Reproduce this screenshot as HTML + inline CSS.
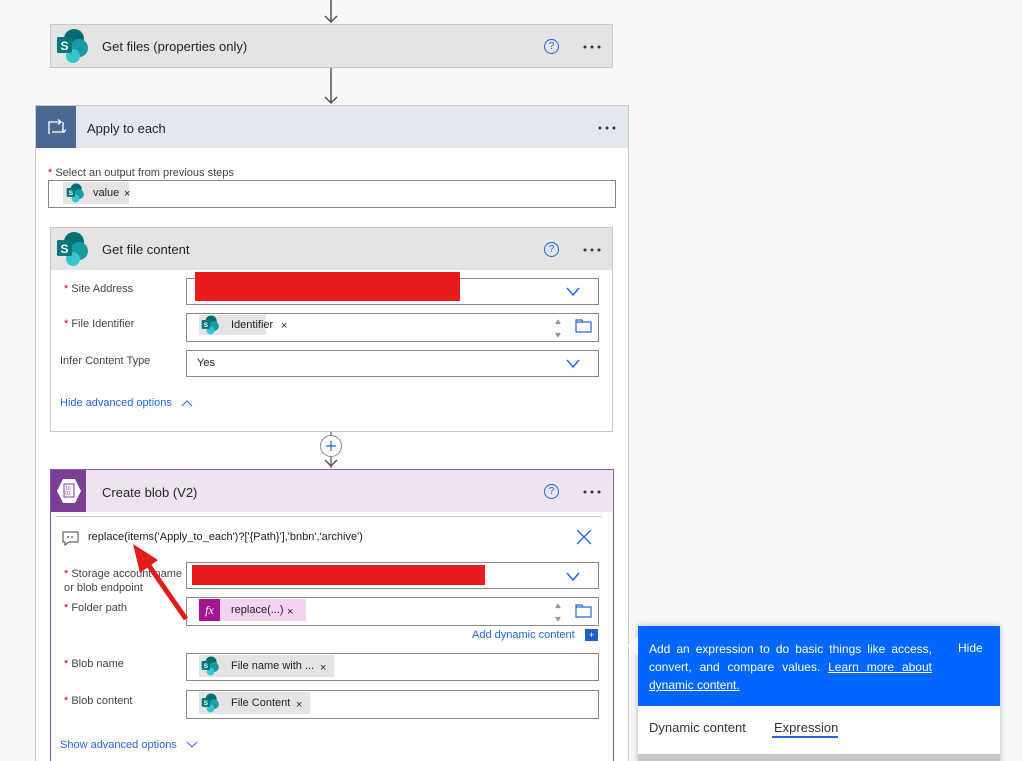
<!DOCTYPE html>
<html><head><meta charset="utf-8"><style>
*{box-sizing:border-box;margin:0;padding:0}
html,body{width:1022px;height:761px;overflow:hidden}
body{background:#f8f8f8;font-family:"Segoe UI","Liberation Sans",sans-serif;font-size:12px;color:#252423;position:relative}
.abs{position:absolute}
.card{position:absolute;border:1px solid #c8c8c8;background:#fff}
.hdr{position:absolute;left:0;right:0;top:0;height:42px;background:#e4e4e4}
.title{position:absolute;font-size:13px;color:#252423}
.dots{position:absolute;width:20px;height:4px}
.help{position:absolute;width:15px;height:15px;border:1.3px solid #2266e3;border-radius:50%;color:#2266e3;font-size:10px;text-align:center;line-height:13px}
.lbl{position:absolute;font-size:11px;color:#444}
.lbl b{color:#c00;font-weight:normal}
.inp{position:absolute;border:1px solid #8a8a8a;background:#fff;height:27px}
.chip{position:absolute;background:#e4e4e4;height:20px;font-size:11px;line-height:19px;color:#222}
.link{position:absolute;color:#2266e3;font-size:11px}
</style></head><body>
<svg class="abs" style="left:0;top:0" width="1022" height="761">
<line x1="331" y1="0" x2="331" y2="22" stroke="#555" stroke-width="1.5"/>
<polyline points="325,16 331,22 337,16" fill="none" stroke="#555" stroke-width="1.5"/>
<line x1="331" y1="67" x2="331" y2="103" stroke="#555" stroke-width="1.5"/>
<polyline points="325,97 331,103 337,97" fill="none" stroke="#555" stroke-width="1.5"/>
</svg>

<!-- Get files -->
<div class="card" style="left:50px;top:24px;width:563px;height:44px;background:#e4e4e4">
  <svg class="abs" style="left:3px;top:3px" width="36" height="36" viewBox="0 0 36 36"><circle cx="20" cy="11" r="10" fill="#036c70"/><circle cx="25" cy="20" r="9" fill="#1a9ba1"/><circle cx="19" cy="28" r="7" fill="#37c6d0"/><rect x="3" y="9" width="15" height="16" rx="1.5" fill="#03787c"/><text x="6.5" y="22" font-size="12" fill="#fff" font-family="Liberation Sans" font-weight="bold">S</text></svg>
  <div class="title" style="left:51px;top:14px">Get files (properties only)</div>
  <div class="help" style="left:493px;top:14px">?</div>
  <svg class="dots" style="left:532px;top:20px" viewBox="0 0 20 4"><circle cx="2" cy="2" r="1.5" fill="#333"/><circle cx="9" cy="2" r="1.5" fill="#333"/><circle cx="16" cy="2" r="1.5" fill="#333"/></svg>
</div>

<!-- Apply to each -->
<div class="card" style="left:35px;top:105px;width:594px;height:670px">
  <div class="hdr" style="background:#e3e8f0;height:42px"></div>
  <div class="abs" style="left:0;top:0;width:40px;height:42px;background:#4a6890"></div>
  <svg class="abs" style="left:10px;top:13px" width="20" height="16" viewBox="0 0 20 16"><path d="M3 15V3h12M12 0.5l3 2.5-3 2.5M17 3v10H6M16 10.5l2 2.5 2-2.5" fill="none" stroke="#fff" stroke-width="1.3"/></svg>
  <div class="title" style="left:51px;top:15px">Apply to each</div>
  <svg class="dots" style="left:562px;top:20px" viewBox="0 0 20 4"><circle cx="2" cy="2" r="1.5" fill="#333"/><circle cx="9" cy="2" r="1.5" fill="#333"/><circle cx="16" cy="2" r="1.5" fill="#333"/></svg>
  <div class="lbl" style="left:12px;top:61px"><b>*</b> Select an output from previous steps</div>
  <div class="inp" style="left:12px;top:74px;width:568px;height:28px;border-color:#888"></div>
  <div class="chip" style="left:27px;top:76px;width:66px;height:22px">
    <svg class="abs" style="left:2px;top:1px" width="20" height="20" viewBox="0 0 36 36"><circle cx="20" cy="11" r="10" fill="#036c70"/><circle cx="25" cy="20" r="9" fill="#1a9ba1"/><circle cx="19" cy="28" r="7" fill="#37c6d0"/><rect x="3" y="9" width="15" height="16" rx="1.5" fill="#03787c"/><text x="6.5" y="22" font-size="12" fill="#fff" font-weight="bold">S</text></svg>
    <span class="abs" style="left:30px;top:2px">value</span><span class="abs" style="left:61px;top:3px">×</span>
  </div>
</div>

<!-- Get file content -->
<div class="card" style="left:50px;top:227px;width:563px;height:205px">
  <div class="hdr"></div>
  <svg class="abs" style="left:3px;top:3px" width="36" height="36" viewBox="0 0 36 36"><circle cx="20" cy="11" r="10" fill="#036c70"/><circle cx="25" cy="20" r="9" fill="#1a9ba1"/><circle cx="19" cy="28" r="7" fill="#37c6d0"/><rect x="3" y="9" width="15" height="16" rx="1.5" fill="#03787c"/><text x="6.5" y="22" font-size="12" fill="#fff" font-weight="bold">S</text></svg>
  <div class="title" style="left:51px;top:14px">Get file content</div>
  <div class="help" style="left:493px;top:14px">?</div>
  <svg class="dots" style="left:532px;top:20px" viewBox="0 0 20 4"><circle cx="2" cy="2" r="1.5" fill="#333"/><circle cx="9" cy="2" r="1.5" fill="#333"/><circle cx="16" cy="2" r="1.5" fill="#333"/></svg>
</div>
<div class="lbl" style="left:64px;top:283px"><b>*</b> Site Address</div>
<div class="inp" style="left:186px;top:278px;width:413px"></div>
<div class="abs" style="left:195px;top:272px;width:265px;height:29px;background:#e81c1e"></div>
<div class="lbl" style="left:64px;top:318px"><b>*</b> File Identifier</div>
<div class="inp" style="left:186px;top:313px;width:413px;height:29px"></div>
<div class="chip" style="left:199px;top:315px;width:67px">
  <svg class="abs" style="left:1px;top:0" width="20" height="20" viewBox="0 0 36 36"><circle cx="20" cy="11" r="10" fill="#036c70"/><circle cx="25" cy="20" r="9" fill="#1a9ba1"/><circle cx="19" cy="28" r="7" fill="#37c6d0"/><rect x="3" y="9" width="15" height="16" rx="1.5" fill="#03787c"/><text x="6.5" y="22" font-size="12" fill="#fff" font-weight="bold">S</text></svg>
  <span class="abs" style="left:32px;top:1px">Identifier</span><span class="abs" style="left:82px;top:2px">×</span>
</div>
<div class="lbl" style="left:60px;top:355px">Infer Content Type</div>
<div class="inp" style="left:186px;top:350px;width:413px"></div>
<div class="abs" style="left:197px;top:357px;font-size:11px">Yes</div>
<div class="link" style="left:60px;top:397px">Hide advanced options</div>

<svg class="abs" style="left:0;top:0" width="1022" height="761">
<polyline points="567,288 573,295 579,288" fill="none" stroke="#2266e3" stroke-width="1.5"/>
<polyline points="567,360 573,367 579,360" fill="none" stroke="#2266e3" stroke-width="1.5"/>
<polyline points="182,406 187,401 192,406" fill="none" stroke="#2266e3" stroke-width="1"/>
<polyline points="556,324 558,321 560,324" fill="#999" stroke="#999" stroke-width="2"/>
<polyline points="556,333 558,336 560,333" fill="#999" stroke="#999" stroke-width="2"/>
<path d="M576 320h6l1 2h8v10h-15z M576 322h15" fill="none" stroke="#2266e3" stroke-width="1.2"/>
<line x1="331" y1="432" x2="331" y2="468" stroke="#555" stroke-width="1.2"/>
<circle cx="331" cy="446" r="10.5" fill="#fff" stroke="#888"/>
<path d="M326 446h10M331 441v10" stroke="#2266e3" stroke-width="1.2"/>
<polyline points="325,460 331,466 337,460" fill="none" stroke="#555" stroke-width="1.5"/>
</svg>

<!-- Create blob -->
<div class="card" style="left:50px;top:469px;width:564px;height:300px;border-color:#8b5aa8">
  <div class="hdr" style="background:#ede4f0"></div>
  <div class="abs" style="left:0;top:0;width:35px;height:42px;background:#7b3f98"></div>
  <svg class="abs" style="left:5px;top:8px" width="26" height="26" viewBox="0 0 26 26"><polygon points="7,1 19,1 25,13 19,25 7,25 1,13" fill="#fff"/><rect x="8" y="6" width="10" height="13" fill="none" stroke="#7b3f98" stroke-width="1"/><text x="9" y="12" font-size="5" fill="#7b3f98">10</text><text x="9" y="17" font-size="5" fill="#7b3f98">01</text></svg>
  <div class="title" style="left:51px;top:15px">Create blob (V2)</div>
  <div class="help" style="left:493px;top:14px">?</div>
  <svg class="dots" style="left:532px;top:20px" viewBox="0 0 20 4"><circle cx="2" cy="2" r="1.5" fill="#333"/><circle cx="9" cy="2" r="1.5" fill="#333"/><circle cx="16" cy="2" r="1.5" fill="#333"/></svg>
  <div class="abs" style="left:4px;top:46px;width:547px;height:1px;background:#ccc"></div>
</div>
<div class="abs" style="left:88px;top:531px;font-size:11px;color:#222">replace(items('Apply_to_each')?['{Path}'],'bnbn','archive')</div>
<div class="lbl" style="left:64px;top:567px;line-height:14px"><b>*</b> Storage account name<br>or blob endpoint</div>
<div class="inp" style="left:186px;top:562px;width:413px"></div>
<div class="abs" style="left:192px;top:565px;width:293px;height:20px;background:#e81c1e"></div>
<div class="lbl" style="left:64px;top:602px"><b>*</b> Folder path</div>
<div class="inp" style="left:186px;top:597px;width:413px;height:29px"></div>
<div class="chip" style="left:199px;top:599px;width:107px;height:22px;background:#f3d3ee">
  <div class="abs" style="left:0;top:0;width:21px;height:22px;background:#a3168f;color:#fff;font-family:'Liberation Serif',serif;font-style:italic;text-align:center;font-size:12px;line-height:22px">fx</div>
  <span class="abs" style="left:32px;top:2px">replace(...)</span><span class="abs" style="left:88px;top:4px">×</span>
</div>
<div class="link" style="left:472px;top:629px">Add dynamic content</div>
<div class="abs" style="left:585px;top:629px;width:13px;height:12px;background:#1f5fc4;color:#fff;font-size:9px;text-align:center;line-height:12px">+</div>
<div class="lbl" style="left:64px;top:658px"><b>*</b> Blob name</div>
<div class="inp" style="left:186px;top:653px;width:413px;height:28px"></div>
<div class="chip" style="left:199px;top:655px;width:135px;height:22px">
  <svg class="abs" style="left:1px;top:1px" width="20" height="20" viewBox="0 0 36 36"><circle cx="20" cy="11" r="10" fill="#036c70"/><circle cx="25" cy="20" r="9" fill="#1a9ba1"/><circle cx="19" cy="28" r="7" fill="#37c6d0"/><rect x="3" y="9" width="15" height="16" rx="1.5" fill="#03787c"/><text x="6.5" y="22" font-size="12" fill="#fff" font-weight="bold">S</text></svg>
  <span class="abs" style="left:32px;top:2px">File name with ...</span><span class="abs" style="left:121px;top:4px">×</span>
</div>
<div class="lbl" style="left:64px;top:695px"><b>*</b> Blob content</div>
<div class="inp" style="left:186px;top:690px;width:413px;height:29px"></div>
<div class="chip" style="left:199px;top:692px;width:111px;height:22px">
  <svg class="abs" style="left:1px;top:1px" width="20" height="20" viewBox="0 0 36 36"><circle cx="20" cy="11" r="10" fill="#036c70"/><circle cx="25" cy="20" r="9" fill="#1a9ba1"/><circle cx="19" cy="28" r="7" fill="#37c6d0"/><rect x="3" y="9" width="15" height="16" rx="1.5" fill="#03787c"/><text x="6.5" y="22" font-size="12" fill="#fff" font-weight="bold">S</text></svg>
  <span class="abs" style="left:32px;top:2px">File Content</span><span class="abs" style="left:97px;top:4px">×</span>
</div>
<div class="link" style="left:60px;top:739px">Show advanced options</div>

<svg class="abs" style="left:0;top:0" width="1022" height="761">
<path d="M63 532h15v10h-9l-4 3v-3h-2z" fill="none" stroke="#444" stroke-width="1"/>
<circle cx="68" cy="537" r=".9" fill="#444"/><circle cx="72" cy="537" r=".9" fill="#444"/>
<path d="M577 530l14 14M591 530l-14 14" stroke="#2266e3" stroke-width="1.3"/>
<polyline points="567,573 573,580 579,573" fill="none" stroke="#2266e3" stroke-width="1.5"/>
<polyline points="556,608 558,605 560,608" fill="#999" stroke="#999" stroke-width="2"/>
<polyline points="556,617 558,620 560,617" fill="#999" stroke="#999" stroke-width="2"/>
<path d="M576 605h6l1 2h8v10h-15z M576 607h15" fill="none" stroke="#2266e3" stroke-width="1.2"/>
<polyline points="187,742 192,747 197,742" fill="none" stroke="#2266e3" stroke-width="1"/>
<line x1="186" y1="619" x2="145" y2="560" stroke="#e31b1b" stroke-width="5"/>
<polygon points="133,544 158,560 140,573" fill="#e31b1b"/>
</svg>

<!-- Popup -->
<div class="abs" style="left:638px;top:626px;width:362px;height:140px;background:#fff;box-shadow:0 0 6px rgba(0,0,0,.25)">
  <div class="abs" style="left:0;top:0;width:362px;height:80px;background:#0066ff;color:#fff;font-size:12px">
    <div class="abs" style="left:11px;top:14px;width:283px;line-height:18px;text-align:justify">Add an expression to do basic things like access, convert, and compare values. <u>Learn more about dynamic content.</u></div>
    <div class="abs" style="left:320px;top:15px">Hide</div>
  </div>
  <div class="abs" style="left:11px;top:94px;font-size:13px;color:#333">Dynamic content</div>
  <div class="abs" style="left:136px;top:94px;font-size:13px;color:#333">Expression</div>
  <div class="abs" style="left:134px;top:110px;width:66px;height:2px;background:#2266e3"></div>
  <div class="abs" style="left:0;top:128px;width:362px;height:12px;background:#c8c8c6"></div>
</div>
<div class="abs" style="left:627px;top:637px;width:0;height:0;border-top:9px solid transparent;border-bottom:9px solid transparent;border-right:11px solid #fff"></div>
</body></html>
